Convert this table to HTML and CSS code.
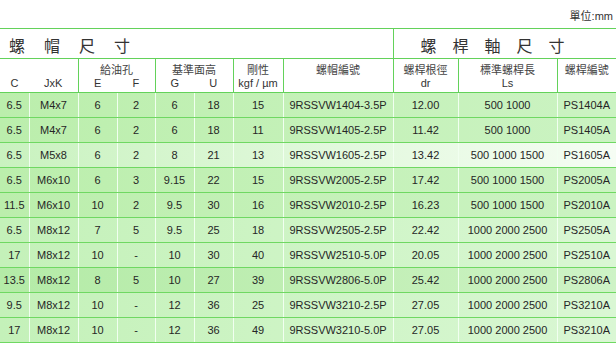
FILE: index.html
```html
<!DOCTYPE html>
<html>
<head>
<meta charset="utf-8">
<link rel="stylesheet" href="styles.css">
</head>
<body>
<div class="unit">單位:mm</div>
<table class="spec">
  <colgroup>
    <col style="width:29px"><col style="width:49px"><col style="width:39px"><col style="width:38px"><col style="width:39px"><col style="width:39px"><col style="width:50px"><col style="width:110px"><col style="width:65px"><col style="width:99px"><col style="width:59px">
  </colgroup>
  <tr class="title">
    <td colspan="8" class="t-left br">螺帽尺寸</td>
    <td colspan="3" class="t-right">螺桿軸尺寸</td>
  </tr>
  <tr class="h1">
    <th></th><th class="br"></th>
    <th colspan="2" class="br cjk">給油孔</th>
    <th colspan="2" class="br cjk">基準面高</th>
    <th class="br cjk">剛性</th>
    <th class="br cjk">螺帽編號</th>
    <th class="br cjk">螺桿根徑</th>
    <th class="br cjk">標準螺桿長</th>
    <th class="cjk">螺桿編號</th>
  </tr>
  <tr class="h2">
    <th>C</th><th class="br">JxK</th>
    <th>E</th><th class="br">F</th>
    <th>G</th><th class="br">U</th>
    <th class="br">kgf / µm</th>
    <th class="br"></th>
    <th class="br">dr</th>
    <th class="br">Ls</th>
    <th></th>
  </tr>
  <tr class="r g1"><td>6.5</td><td>M4x7</td><td>6</td><td>2</td><td>6</td><td>18</td><td>15</td><td>9RSSVW1404-3.5P</td><td>12.00</td><td>500 1000</td><td>PS1404A</td></tr>
  <tr class="r g1"><td>6.5</td><td>M4x7</td><td>6</td><td>2</td><td>6</td><td>18</td><td>11</td><td>9RSSVW1405-2.5P</td><td>11.42</td><td>500 1000</td><td>PS1405A</td></tr>
  <tr class="r g3"><td>6.5</td><td>M5x8</td><td>6</td><td>2</td><td>8</td><td>21</td><td>13</td><td>9RSSVW1605-2.5P</td><td>13.42</td><td>500 1000 1500</td><td>PS1605A</td></tr>
  <tr class="r g1"><td>6.5</td><td>M6x10</td><td>6</td><td>3</td><td>9.15</td><td>22</td><td>15</td><td>9RSSVW2005-2.5P</td><td>17.42</td><td>500 1000 1500</td><td>PS2005A</td></tr>
  <tr class="r g1"><td>11.5</td><td>M6x10</td><td>10</td><td>2</td><td>9.5</td><td>30</td><td>16</td><td>9RSSVW2010-2.5P</td><td>16.23</td><td>500 1000 1500</td><td>PS2010A</td></tr>
  <tr class="r g2"><td>6.5</td><td>M8x12</td><td>7</td><td>5</td><td>9.5</td><td>25</td><td>18</td><td>9RSSVW2505-2.5P</td><td>22.42</td><td>1000 2000 2500</td><td>PS2505A</td></tr>
  <tr class="r g2"><td>17</td><td>M8x12</td><td>10</td><td>-</td><td>10</td><td>30</td><td>40</td><td>9RSSVW2510-5.0P</td><td>20.05</td><td>1000 2000 2500</td><td>PS2510A</td></tr>
  <tr class="r g4"><td>13.5</td><td>M8x12</td><td>8</td><td>5</td><td>10</td><td>27</td><td>39</td><td>9RSSVW2806-5.0P</td><td>25.42</td><td>1000 2000 2500</td><td>PS2806A</td></tr>
  <tr class="r g2"><td>9.5</td><td>M8x12</td><td>10</td><td>-</td><td>12</td><td>36</td><td>25</td><td>9RSSVW3210-2.5P</td><td>27.05</td><td>1000 2000 2500</td><td>PS3210A</td></tr>
  <tr class="r g2"><td>17</td><td>M8x12</td><td>10</td><td>-</td><td>12</td><td>36</td><td>49</td><td>9RSSVW3210-5.0P</td><td>27.05</td><td>1000 2000 2500</td><td>PS3210A</td></tr>
</table>
</body>
</html>
```
FILE: styles.css
```css
html, body {
  margin: 0;
  padding: 0;
  background: #ffffff;
}
body {
  font-family: "Liberation Sans", Arial, "Noto Sans CJK TC", sans-serif;
  color: #333;
}
.unit {
  height: 28px;
  box-sizing: border-box;
  padding-top: 10px;
  padding-right: 3px;
  text-align: right;
  font-size: 11px;
  line-height: 13px;
  font-family: "Liberation Sans", "Noto Sans CJK TC", sans-serif;
  color: #333;
}
.spec {
  width: 616px;
  table-layout: fixed;
  border-collapse: collapse;
  font-size: 11px;
}
.spec td, .spec th {
  padding: 0;
  text-align: center;
  font-weight: normal;
  white-space: nowrap;
  overflow: hidden;
}
.title td {
  height: 27px;
  border-top: 1px solid #63d25a;
  border-bottom: 1px solid #63d25a;
  font-family: "Noto Sans CJK TC", sans-serif;
  font-size: 16px;
  color: #333;
  text-align: left;
  line-height: 20px;
  padding-top: 2px;
}
.t-left {
  padding-left: 9px !important;
  letter-spacing: 19px;
}
.t-right {
  padding-left: 27px !important;
  letter-spacing: 16px;
}
.br {
  border-right: 1px solid #63d25a;
}
.h1 th {
  height: 17px;
  vertical-align: bottom;
  line-height: 14px;
}
.h2 th {
  height: 16px;
  vertical-align: top;
  line-height: 14px;
  border-bottom: 1px solid #63d25a;
}
.cjk {
  font-family: "Noto Sans CJK TC", sans-serif;
  font-size: 11px;
  color: #444;
}
.r td {
  height: 24px;
  border-bottom: 1px solid #6fd862;
  border-right: 1px solid rgba(240, 255, 238, 0.9);
  color: #262626;
}
.r td:last-child {
  border-right: none;
}
.g1 {
  background: linear-gradient(to right, #bbeeac, #c4f1b8 50%, #cbf3c2);
}
.g2 {
  background: linear-gradient(to right, #c4f1b9, #d0f5c8 60%, #daf7d4);
}
.g3 {
  background: linear-gradient(to right, #c9f2bf, #e2f9dd 55%, #f6fdf4);
}
.g4 {
  background: linear-gradient(to right, #b4eba7, #c2efb6 60%, #cef3c6);
}
```
